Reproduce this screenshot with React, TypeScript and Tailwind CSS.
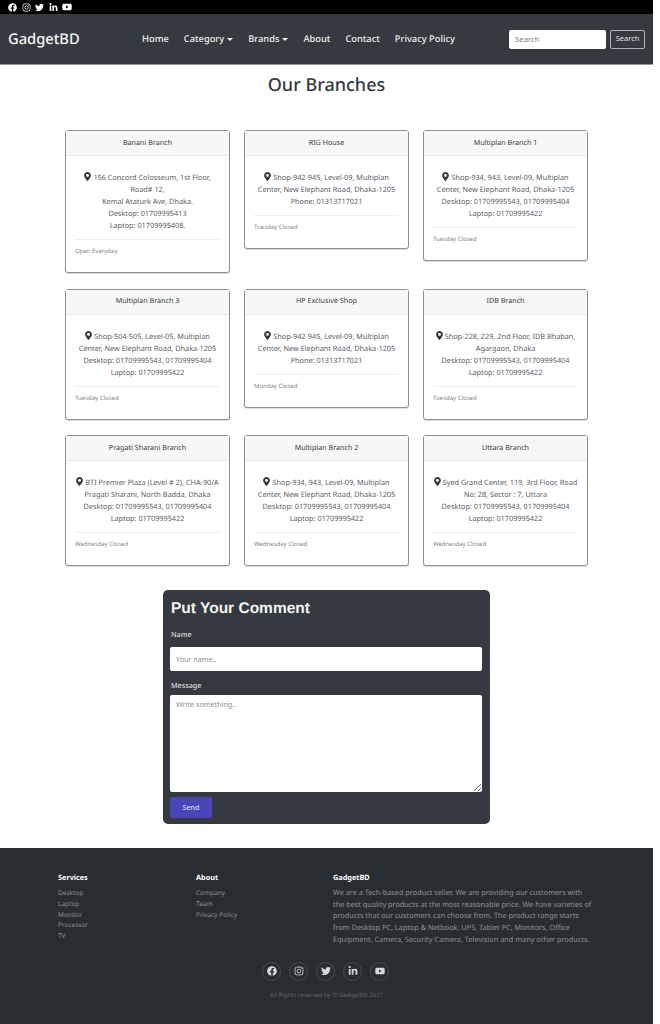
import { FaFacebook, FaInstagram, FaLinkedinIn, FaMapMarkerAlt, FaTwitter, FaYoutube } from "react-icons/fa";

interface IBranch {
  name: string;
  lines: string[];
  note: string;
}

const branchRows: IBranch[][] = [
  [
    {
      name: "Banani Branch",
      lines: ["156 Concord Colosseum, 1st Floor, Road# 12,", "Kemal Ataturk Ave, Dhaka.", "Desktop: 01709995413", "Laptop: 01709995408."],
      note: "Open Everyday",
    },
    {
      name: "RIG House",
      lines: ["Shop-942-945, Level-09, Multiplan Center, New Elephant Road, Dhaka-1205", "Phone: 01313717021"],
      note: "Tuesday Closed",
    },
    {
      name: "Multiplan Branch 1",
      lines: ["Shop-934, 943, Level-09, Multiplan Center, New Elephant Road, Dhaka-1205", "Desktop: 01709995543, 01709995404", "Laptop: 01709995422"],
      note: "Tuesday Closed",
    },
  ],
  [
    {
      name: "Multiplan Branch 3",
      lines: ["Shop-504-505, Level-05, Multiplan Center, New Elephant Road, Dhaka-1205", "Desktop: 01709995543, 01709995404", "Laptop: 01709995422"],
      note: "Tuesday Closed",
    },
    {
      name: "HP Exclusive Shop",
      lines: ["Shop-942-945, Level-09, Multiplan Center, New Elephant Road, Dhaka-1205", "Phone: 01313717021"],
      note: "Monday Closed",
    },
    {
      name: "IDB Branch",
      lines: ["Shop-228, 229, 2nd Floor, IDB Bhaban, Agargaon, Dhaka", "Desktop: 01709995543, 01709995404", "Laptop: 01709995422"],
      note: "Tuesday Closed",
    },
  ],
  [
    {
      name: "Pragati Sharani Branch",
      lines: ["BTI Premier Plaza (Level # 2), CHA-90/A Pragati Sharani, North Badda, Dhaka", "Desktop: 01709995543, 01709995404", "Laptop: 01709995422"],
      note: "Wednesday Closed",
    },
    {
      name: "Multiplan Branch 2",
      lines: ["Shop-934, 943, Level-09, Multiplan Center, New Elephant Road, Dhaka-1205", "Desktop: 01709995543, 01709995404", "Laptop: 01709995422"],
      note: "Wednesday Closed",
    },
    {
      name: "Uttara Branch",
      lines: ["Syed Grand Center, 119, 3rd Floor, Road No: 28, Sector : 7, Uttara", "Desktop: 01709995543, 01709995404", "Laptop: 01709995422"],
      note: "Wednesday Closed",
    },
  ],
];

const socialIcons = [FaFacebook, FaInstagram, FaTwitter, FaLinkedinIn, FaYoutube];
const navLinks = ["Home", "Category", "Brands", "About", "Contact", "Privacy Policy"];
const services = ["Desktop", "Laptop", "Monitor", "Processor", "TV"];
const about = ["Company", "Team", "Privacy Policy"];

const BranchCard = ({ branch }: { branch: IBranch }) => {
  return (
    <div className="w-[165px] self-start rounded-[3px] border border-[#8f8f8f] bg-white shadow-[0_1px_1px_rgba(0,0,0,0.15)]">
      <div className="flex h-[25px] items-center justify-center border-b border-[#e8e8e8] bg-[#f7f7f7] text-[7.2px] text-[#343a40]">
        {branch.name}
      </div>
      <div className="px-[9px] pt-[16px] pb-[7px]">
        <div className="text-center text-[7.3px] leading-[12px] text-[#5a6066]">
          {branch.lines.map((line, index) => (
            <p key={line}>
              {index === 0 && <FaMapMarkerAlt className="mr-[2px] inline-block h-[9px] w-[7px] align-[-1px] text-[#343a40]" />}
              {line}
            </p>
          ))}
        </div>
        <div className="mt-[7px] border-t border-[#eeeeee] pt-[7px] text-[6px] leading-[9px] text-[#7d858c]">{branch.note}</div>
        <div className="h-[9px]" />
      </div>
    </div>
  );
};

const App = () => {
  return (
    <div className="min-h-[1024px] w-[660px] bg-white font-['Noto_Sans',sans-serif] [text-rendering:geometricPrecision]">
      <div className="w-[653px]">
        <div className="flex h-[14px] items-center gap-[4.5px] bg-black pl-[8px] text-white">
          <FaFacebook className="h-[9px] w-[9px]" />
          <FaInstagram className="h-[9px] w-[9px]" />
          <FaTwitter className="h-[9px] w-[9px]" />
          <FaLinkedinIn className="h-[9px] w-[9px]" />
          <FaYoutube className="h-[10px] w-[10px]" />
        </div>

        <nav className="flex h-[51px] items-center border-b border-[#9a9a9a] bg-[#343a40] pl-[8px]">
          <div className="w-[134px] text-[14.7px] font-medium text-[#f4f4f4]">GadgetBD</div>
          <div className="flex w-[367px] gap-[15px] text-[9.3px] font-medium text-[#eeeeee]">
            {navLinks.map((link) => (
              <span key={link} className="flex items-center">
                {link}
                {(link === "Category" || link === "Brands") && (
                  <span className="ml-[3px] h-0 w-0 border-x-[3px] border-t-[3px] border-x-transparent border-t-[#eeeeee]" />
                )}
              </span>
            ))}
          </div>
          <input
            placeholder="Search"
            className="h-[19px] w-[97px] rounded-[2px] bg-white px-[6px] text-[7.8px] outline-none placeholder:text-[#7d858c]"
          />
          <button className="ml-[4px] h-[19px] w-[35px] rounded-[2px] border border-[#aeb4b9] text-[7.5px] text-[#e2e4e6]">Search</button>
        </nav>

        <h1 className="pt-[7px] text-center text-[18px] leading-[27px] font-medium text-[#343a40]">Our Branches</h1>

        <div className="mt-[31px] flex flex-col gap-[15.5px] pl-[65px]">
          {branchRows.map((row) => (
            <div key={row[0].name} className="flex gap-[14px]">
              {row.map((branch) => (
                <BranchCard key={branch.name} branch={branch} />
              ))}
            </div>
          ))}
        </div>

        <div className="mx-auto mt-[24px] h-[234px] w-[327px] rounded-[5px] bg-[#343a40] px-[7px] pt-[9px]">
          <h2 className="pl-[1px] font-['Liberation_Sans',sans-serif] text-[15.5px] leading-[20px] font-bold text-[#f4f4f4]">Put Your Comment</h2>
          <label className="mt-[10px] block pl-[1px] text-[7.2px] leading-[12px] font-medium text-[#dddddd]">Name</label>
          <input
            placeholder="Your name.."
            className="mt-[6px] block h-[24px] w-[312px] rounded-[2px] bg-white px-[6px] text-[7.2px] outline-none placeholder:text-[#8a9097]"
          />
          <label className="mt-[9px] block pl-[1px] text-[7.2px] leading-[12px] font-medium text-[#dddddd]">Message</label>
          <textarea
            placeholder="Write something.."
            className="mt-[3px] block h-[97px] w-[312px] rounded-[2px] bg-white px-[6px] py-[4px] text-[7.2px] outline-none placeholder:text-[#8a9097]"
          />
          <button className="mt-[5px] h-[21px] w-[42px] rounded-[2px] bg-[#4a46b8] text-[7.2px] text-[#e8e8f6]">Send</button>
        </div>

        <footer className="mt-[24px] h-[176px] bg-[#282d32] pt-[25px]">
          <div className="flex pl-[58px]">
            <div className="w-[138px]">
              <h3 className="text-[7.3px] leading-[10px] font-bold text-white">Services</h3>
              <ul className="mt-[5px] text-[6.5px] leading-[10.75px] text-[#8b8f93]">
                {services.map((item) => (
                  <li key={item}>{item}</li>
                ))}
              </ul>
            </div>
            <div className="w-[137px]">
              <h3 className="text-[7.3px] leading-[10px] font-bold text-white">About</h3>
              <ul className="mt-[5px] text-[6.5px] leading-[10.75px] text-[#8b8f93]">
                {about.map((item) => (
                  <li key={item}>{item}</li>
                ))}
              </ul>
            </div>
            <div className="w-[262px]">
              <h3 className="text-[7.3px] leading-[10px] font-bold text-white">GadgetBD</h3>
              <p className="mt-[5px] text-[7.32px] leading-[11.7px] text-[#8f9397]">
                We are a Tech-based product seller. We are providing our customers with the best quality products at the most reasonable price. We have varieties of products that our customers can choose from. The product range starts from Desktop PC, Laptop &amp; Netbook, UPS, Tablet PC, Monitors, Office Equipment, Camera, Security Camera, Television and many other products.
              </p>
            </div>
          </div>
          <div className="mt-[15px] flex justify-center gap-[8px] pr-[2px]">
            {socialIcons.map((Icon, index) => (
              <span key={index} className="flex h-[19px] w-[19px] items-center justify-center rounded-full border border-[#484d52] text-[#d6d7d8]">
                <Icon className="h-[10px] w-[10px]" />
              </span>
            ))}
          </div>
          <p className="mt-[10px] text-center text-[6px] text-[#5f6468]">All Rights reserved by © GadgetBD 2021</p>
        </footer>
      </div>
    </div>
  );
};

export default App;
